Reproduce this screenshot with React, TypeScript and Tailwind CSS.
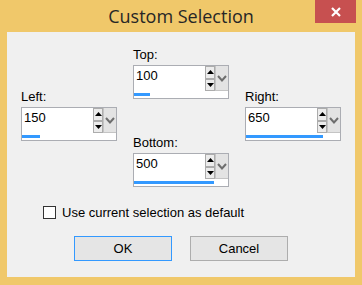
import React from 'react';

const SpinArrow = ({ up }: { up?: boolean }) => (
  <div className="flex-1 flex items-center justify-center border border-[#acacac] bg-[#ececec]">
    <svg width="7" height="4" viewBox="0 0 7 4">
      {up ? <path d="M0 4 L3.5 0 L7 4 Z" fill="#000" /> : <path d="M0 0 L3.5 4 L7 0 Z" fill="#000" />}
    </svg>
  </div>
);

interface SpinnerProps {
  label: string;
  value: string;
  fill: number;
}

const Spinner: React.FC<SpinnerProps> = ({ label, value, fill }) => (
  <div className="flex flex-col">
    <div className="text-[13px] leading-[15px] text-black">{label}</div>
    <div className="mt-[3px] w-[96px] border border-[#abadb3] bg-white flex flex-col">
      <div className="flex h-[25px]">
        <div className="flex-1 pl-[2px] pt-[2px] text-[13px] leading-[15px] text-black">{value}</div>
        <div className="w-[10px] flex flex-col">
          <SpinArrow up />
          <SpinArrow />
        </div>
        <div className="w-[13px] bg-[#e3e3e3] border-l border-b border-[#c4c4c4] flex items-center justify-center">
          <svg width="10" height="7" viewBox="0 0 10 7">
            <path d="M1 1 L5 5.5 L9 1" fill="none" stroke="#6e6e6e" strokeWidth="2" />
          </svg>
        </div>
      </div>
      <div className="h-[7px] pt-[2px]">
        <div className="h-[3px] bg-[#3399ff]" style={{ width: fill }} />
      </div>
    </div>
  </div>
);

export default function App() {
  return (
    <div className="w-[362px] h-[285px] bg-[#f0c86a] flex flex-col font-['Liberation_Sans',Arial,sans-serif] overflow-hidden">
      <div className="relative h-[32px] flex items-start justify-center">
        <div className="mt-[3px] text-[18px] leading-[26px] text-[#262626] font-['Open_Sans','Noto_Sans',sans-serif]">
          Custom Selection
        </div>
        <div className="absolute left-[315px] top-0 w-[41px] h-[23px] bg-[#c75050] flex items-center justify-center">
          <svg width="10" height="10" viewBox="0 0 10 10">
            <path d="M1 1 L9 9 M9 1 L1 9" stroke="#fff" strokeWidth="2.2" />
          </svg>
        </div>
      </div>
      <div className="mx-[7px] mb-[8px] flex-1 bg-[#f0f0f0] flex flex-col">
        <div className="flex pl-[14px] gap-x-[16px] h-[158px]">
          <div className="pt-[57px]">
            <Spinner label="Left:" value="150" fill={18} />
          </div>
          <div className="pt-[15px] flex flex-col gap-y-[36px]">
            <Spinner label="Top:" value="100" fill={16} />
            <Spinner label="Bottom:" value="500" fill={80} />
          </div>
          <div className="pt-[57px]">
            <Spinner label="Right:" value="650" fill={77} />
          </div>
        </div>
        <div className="mt-[15px] pl-[36px] flex items-center gap-x-[6px] h-[15px]">
          <div className="w-[13px] h-[13px] border border-[#333] bg-white" />
          <span className="text-[13px] leading-[15px] text-black">Use current selection as default</span>
        </div>
        <div className="mt-[16px] pl-[67px] flex gap-x-[18px]">
          <button className="w-[98px] h-[25px] border border-[#3399ff] bg-[#e5e5e5] text-[13px] text-black">OK</button>
          <button className="w-[98px] h-[25px] border border-[#adadad] bg-[#e5e5e5] text-[13px] text-black">Cancel</button>
        </div>
      </div>
    </div>
  );
}
